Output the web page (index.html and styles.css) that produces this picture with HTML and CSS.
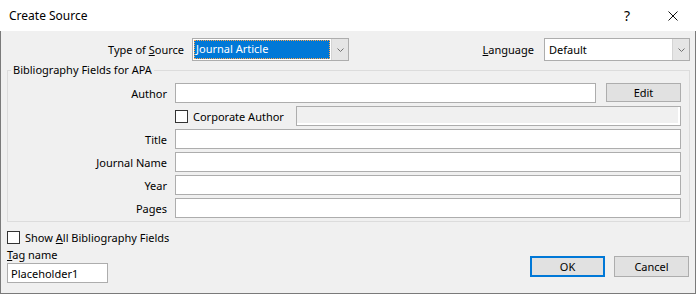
FILE: index.html
```html
<!DOCTYPE html>
<html lang="en">
<head>
    <meta charset="UTF-8">
    <title>Create Source</title>
    <link rel="stylesheet" href="styles.css">
</head>
<body>
    <div class="window">
        <div class="titlebar">
            <span class="title">Create Source</span>
            <span class="caption-btn help">?</span>
            <span class="caption-btn close">
                <svg width="10" height="10" viewBox="0 0 10 10"><path d="M0.5 0.5 L9.5 9.5 M9.5 0.5 L0.5 9.5" stroke="#111" stroke-width="1" fill="none"/></svg>
            </span>
        </div>

        <div class="dialog">
            <div class="source-row">
                <label class="type-label">Type of <u>S</u>ource</label>
                <div class="combo type-combo">
                    <span class="combo-value selected">Journal Article</span>
                    <span class="combo-arrow">
                        <svg width="7" height="4" viewBox="0 0 7 4"><path d="M0.5 0.5 L3.5 3.5 L6.5 0.5" stroke="#707070" fill="none"/></svg>
                    </span>
                </div>
                <div class="spacer"></div>
                <label class="lang-label"><u>L</u>anguage</label>
                <div class="combo lang-combo">
                    <span class="combo-value">Default</span>
                    <span class="combo-arrow">
                        <svg width="7" height="4" viewBox="0 0 7 4"><path d="M0.5 0.5 L3.5 3.5 L6.5 0.5" stroke="#707070" fill="none"/></svg>
                    </span>
                </div>
            </div>

            <fieldset class="fields">
                <legend>Bibliography Fields for APA</legend>
                <div class="field-row">
                    <label class="field-label">Author</label>
                    <input type="text" class="textbox author-box">
                    <button class="btn edit-btn">Edit</button>
                </div>
                <div class="field-row">
                    <span class="field-label"></span>
                    <span class="check"></span>
                    <span class="check-text">Corporate Author</span>
                    <input type="text" class="textbox corp-box" disabled>
                </div>
                <div class="field-row">
                    <label class="field-label">Title</label>
                    <input type="text" class="textbox">
                </div>
                <div class="field-row">
                    <label class="field-label">Journal Name</label>
                    <input type="text" class="textbox">
                </div>
                <div class="field-row">
                    <label class="field-label">Year</label>
                    <input type="text" class="textbox">
                </div>
                <div class="field-row">
                    <label class="field-label">Pages</label>
                    <input type="text" class="textbox">
                </div>
            </fieldset>

            <div class="bottom">
                <div class="tag-col">
                    <div class="show-all">
                        <span class="check"></span>
                        <span>Show <u>A</u>ll Bibliography Fields</span>
                    </div>
                    <div class="tag-label"><u>T</u>ag name</div>
                    <input type="text" class="textbox tag-box" value="Placeholder1">
                </div>
                <div class="actions">
                    <button class="btn ok-btn">OK</button>
                    <button class="btn">Cancel</button>
                </div>
            </div>
        </div>
    </div>
</body>
</html>
```

FILE: styles.css
```css
body {
    margin: 0;
    font-family: "Noto Sans", sans-serif;
    font-size: 11px;
    color: #000;
    background: #fff;
}
.window {
    width: 696px;
    height: 294px;
    display: flex;
    flex-direction: column;
}
.titlebar {
    height: 31px;
    background: #fff;
    display: flex;
    align-items: center;
}
.title {
    flex: 1;
    padding-left: 9px;
    padding-bottom: 1px;
    font-size: 12px;
}
.caption-btn {
    width: 46px;
    height: 31px;
    display: flex;
    align-items: center;
    justify-content: center;
}
.help {
    font-size: 14px;
    padding-bottom: 1px;
}
.dialog {
    flex: 1;
    background: #f0f0f0;
    border: 1px solid #7a7a7a;
    border-top: none;
    padding: 7px 6px 0 6px;
}
.source-row {
    display: flex;
    align-items: center;
    height: 23px;
}
.type-label {
    width: 177px;
    margin-right: 8px;
    text-align: right;
}
.spacer {
    flex: 1;
}
.lang-label {
    margin-right: 10px;
}
.combo {
    box-sizing: border-box;
    height: 23px;
    border: 1px solid #adadad;
    background: #fff;
    display: flex;
}
.type-combo {
    width: 157px;
}
.lang-combo {
    width: 146px;
    margin-right: -1px;
}
.combo-value {
    flex: 1;
    padding-left: 4px;
    line-height: 21px;
}
.combo-value.selected {
    margin: 1px;
    padding-left: 2px;
    line-height: 17px;
    background: #0078d7;
    color: #fff;
    outline: 1px dotted #ffa64d;
    outline-offset: -1px;
}
.combo-arrow {
    width: 16px;
    background: #e5e5e5;
    border-left: 1px solid #d4d4d4;
    display: flex;
    align-items: center;
    justify-content: center;
}
.fields {
    margin: 1px 0 0 0;
    padding: 5px 8px 3px 0;
    border: 1px solid #dcdcdc;
    display: flex;
    flex-direction: column;
    gap: 3px;
}
.fields legend {
    margin-left: 3px;
    padding: 0 2px;
    line-height: 16px;
}
.field-row {
    display: flex;
    align-items: center;
    height: 20px;
}
.field-label {
    width: 159px;
    margin-right: 8px;
    text-align: right;
}
.textbox {
    box-sizing: border-box;
    flex: 1;
    height: 20px;
    margin: 0;
    padding: 0 3px;
    border: 1px solid #adadad;
    background: #fff;
    font: inherit;
    color: #000;
    outline: none;
}
.author-box {
    flex: none;
    width: 421px;
}
.corp-box {
    background: #f0f0f0;
    box-shadow: inset -2px -2px 0 #fff;
}
.check {
    box-sizing: border-box;
    width: 13px;
    height: 13px;
    border: 1px solid #333;
    background: #fff;
    flex: none;
}
.check-text {
    margin-left: 5px;
    margin-right: 12px;
}
.btn {
    box-sizing: border-box;
    width: 75px;
    height: 21px;
    margin: 0;
    padding: 0;
    border: 1px solid #adadad;
    background: #e1e1e1;
    font: inherit;
    color: #000;
}
.edit-btn {
    height: 19px;
    margin-left: 10px;
    align-self: flex-start;
}
.ok-btn {
    border: 2px solid #0078d7;
}
.bottom {
    display: flex;
    justify-content: space-between;
}
.tag-col {
    display: flex;
    flex-direction: column;
}
.show-all {
    display: flex;
    align-items: center;
    gap: 5px;
    height: 15px;
    margin-top: 8px;
}
.tag-label {
    margin-top: 2px;
    line-height: 16px;
}
.tag-box {
    flex: none;
    width: 101px;
}
.actions {
    display: flex;
    gap: 9px;
    padding-top: 34px;
}
```
